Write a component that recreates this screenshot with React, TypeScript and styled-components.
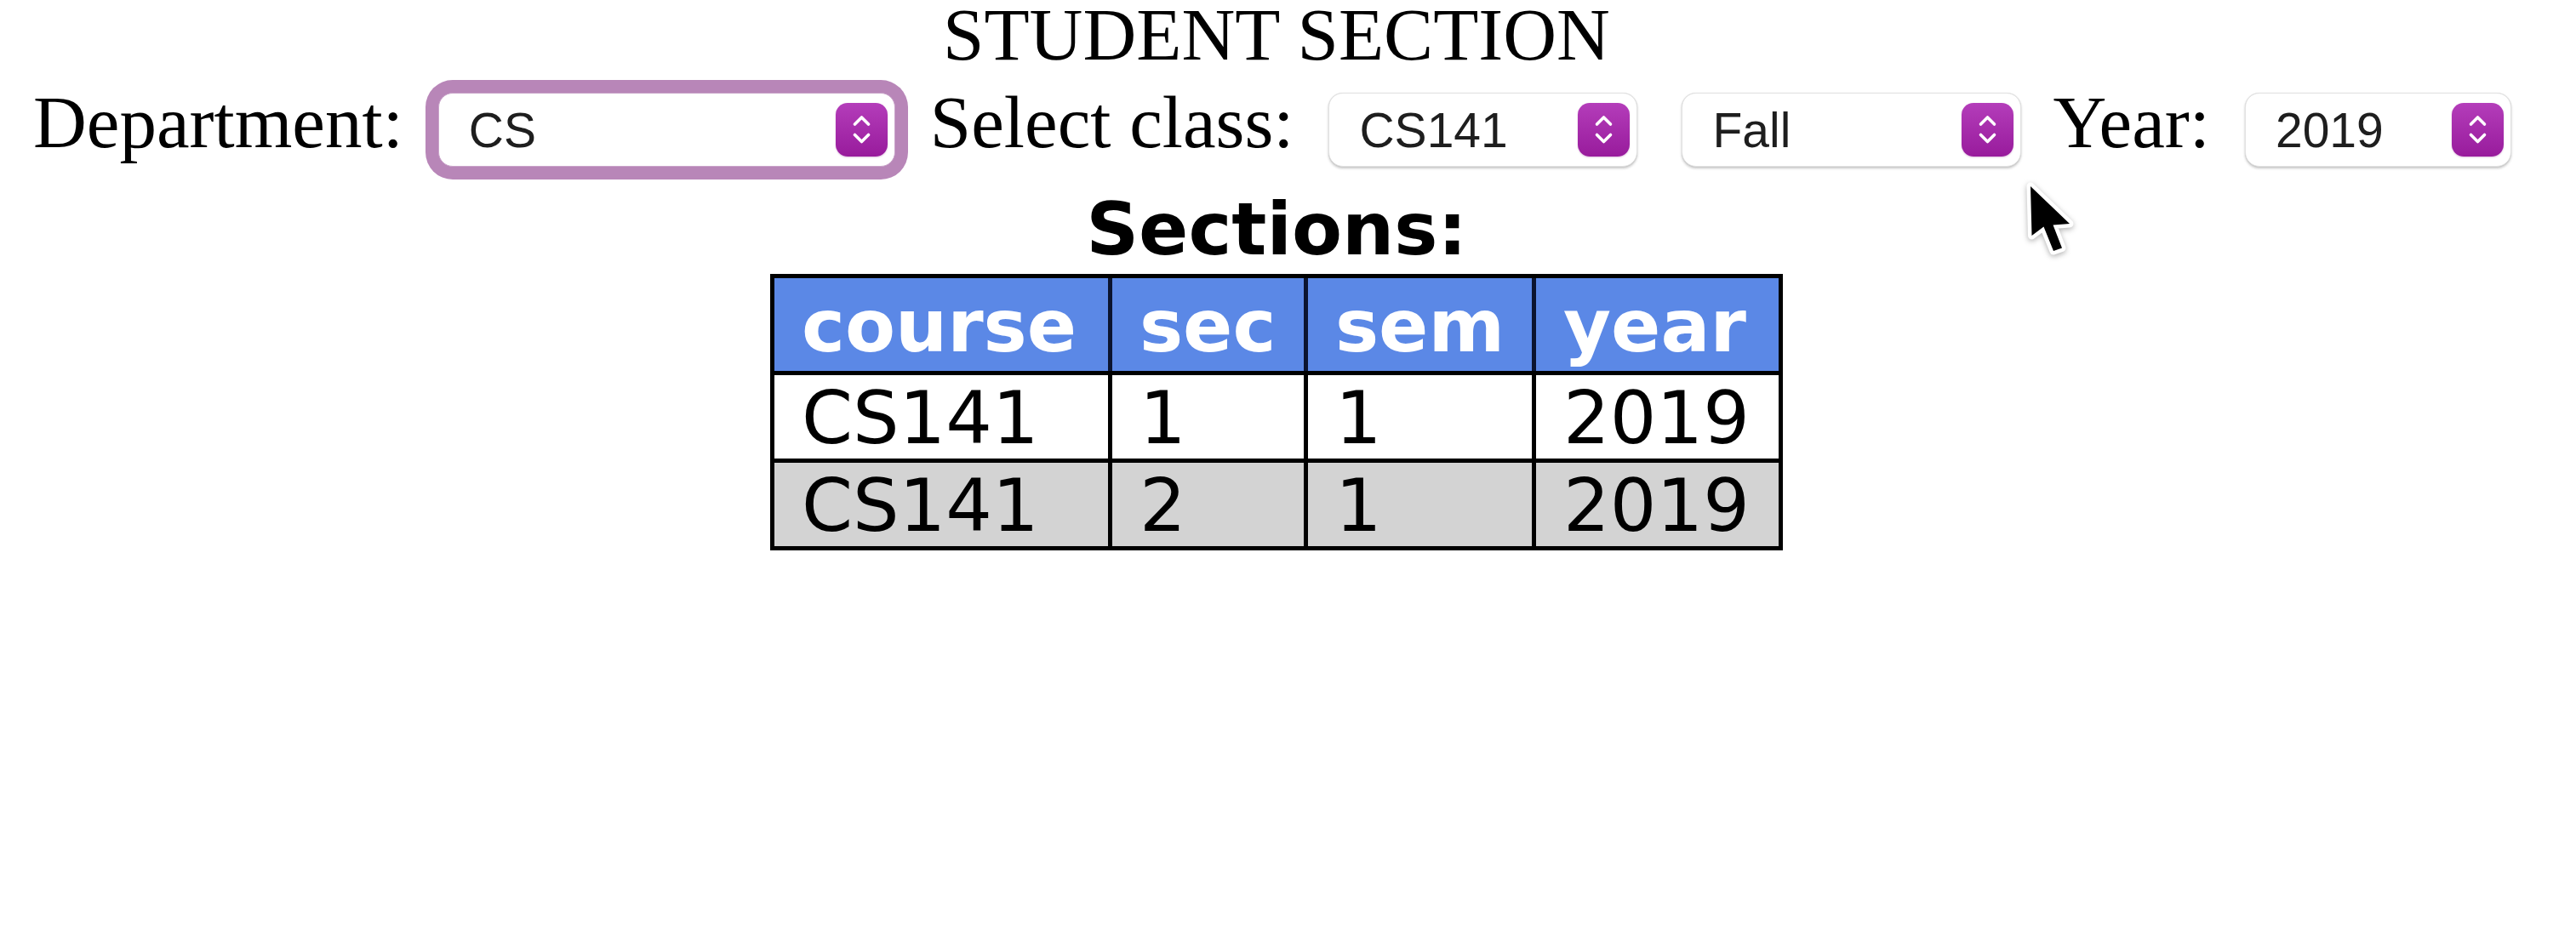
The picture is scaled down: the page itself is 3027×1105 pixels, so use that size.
import React from "react";
import styled, { createGlobalStyle } from "styled-components";

const GlobalStyle = createGlobalStyle`
  html, body { margin: 0; padding: 0; background: #ffffff; }
  body { font-family: "Liberation Serif", "Times New Roman", serif; }
`;

const Page = styled.div`
  position: relative;
  width: 3000px;
  min-height: 1105px;
`;

const Title = styled.h1`
  margin: 0;
  padding-top: 1px;
  font-family: "Liberation Serif", "Times New Roman", serif;
  font-weight: 400;
  font-size: 87px;
  line-height: 80px;
  text-align: center;
  color: #000;
`;

const Controls = styled.div`
  display: flex;
  align-items: baseline;
  margin-top: 23px;
  padding-left: 39px;
`;

const Label = styled.span<{ $ml?: number }>`
  margin-left: ${(p) => p.$ml ?? 0}px;
  font-family: "Liberation Serif", "Times New Roman", serif;
  font-size: 87px;
  line-height: 80px;
  color: #000;
  white-space: nowrap;
`;

const SelectBox = styled.div<{ $w: number; $ml: number; $focused?: boolean }>`
  display: flex;
  align-items: center;
  box-sizing: border-box;
  width: ${(p) => p.$w}px;
  height: 87px;
  margin-left: ${(p) => p.$ml}px;
  padding: 0 8px 0 35px;
  background: #fff;
  border-radius: 17px;
  border: 1px solid ${(p) => (p.$focused ? "#c9a3c9" : "#e2e2e2")};
  box-shadow: ${(p) =>
    p.$focused
      ? "0 0 0 15px #b886b8"
      : "0 2px 3px rgba(0,0,0,0.22), 0 0 1px rgba(0,0,0,0.15)"};
`;

const SelectValue = styled.span`
  flex: 1;
  padding-top: 2px;
  font-family: "Liberation Sans", Arial, sans-serif;
  font-size: 57px;
  line-height: 57px;
  color: #1e1e1e;
  white-space: nowrap;
`;

const ArrowButton = styled.span`
  display: flex;
  align-items: center;
  justify-content: center;
  flex-shrink: 0;
  width: 61px;
  height: 63px;
  border-radius: 14px;
  background: linear-gradient(180deg, #b43dba 0%, #981b9c 100%);
  box-shadow: 0 1px 2px rgba(120, 0, 120, 0.25);
`;

const SectionsHeading = styled.h2`
  margin: 33px 0 0;
  font-family: "DejaVu Sans", Verdana, sans-serif;
  font-weight: 700;
  font-size: 86px;
  line-height: 80px;
  text-align: center;
  color: #000;
`;

const Table = styled.table`
  margin: 13px auto 0;
  border: 5px solid #000;
  border-spacing: 0;
  font-family: "DejaVu Sans", Verdana, sans-serif;
  font-size: 86px;
`;

const HeadCell = styled.th<{ $w: number }>`
  width: ${(p) => p.$w - 64}px;
  background: #5b88e6;
  color: #fff;
  font-weight: 700;
  text-align: left;
  padding: 3px 32px 0;
  line-height: 106px;
  white-space: nowrap;
  & + & {
    border-left: 5px solid #0b1430;
  }
`;

const Cell = styled.td<{ $alt?: boolean }>`
  background: ${(p) => (p.$alt ? "#d3d3d3" : "#ffffff")};
  color: #000;
  font-weight: 400;
  text-align: left;
  padding: 3px 32px 0;
  line-height: 95px;
  border-top: 5px solid #000;
  white-space: nowrap;
  & + & {
    border-left: 5px solid #000;
  }
`;

const Cursor = styled.svg`
  position: absolute;
  left: 2380px;
  top: 213px;
  filter: drop-shadow(0 2px 3px rgba(0, 0, 0, 0.3));
`;

const Chevrons = () => (
  <svg width="61" height="63" viewBox="0 0 61 63" fill="none">
    <polyline
      points="22.5,25 30.5,17 38.5,25"
      stroke="#fff"
      strokeWidth="3.6"
      strokeLinecap="round"
      strokeLinejoin="round"
    />
    <polyline
      points="22.5,37.5 30.5,45.5 38.5,37.5"
      stroke="#fff"
      strokeWidth="3.6"
      strokeLinecap="round"
      strokeLinejoin="round"
    />
  </svg>
);

type SelectProps = { value: string; w: number; ml: number; focused?: boolean };

const Select = ({ value, w, ml, focused }: SelectProps) => (
  <SelectBox $w={w} $ml={ml} $focused={focused}>
    <SelectValue>{value}</SelectValue>
    <ArrowButton>
      <Chevrons />
    </ArrowButton>
  </SelectBox>
);

const columns = [
  { name: "course", w: 392 },
  { name: "sec", w: 225 },
  { name: "sem", w: 260 },
  { name: "year", w: 285 },
];

const rows = [
  ["CS141", "1", "1", "2019"],
  ["CS141", "2", "1", "2019"],
];

export default function App() {
  return (
    <>
      <GlobalStyle />
      <Page>
        <Title>STUDENT SECTION</Title>
        <Controls>
          <Label>Department:</Label>
          <Select value="CS" w={537} ml={41} focused />
          <Label $ml={41}>Select class:</Label>
          <Select value="CS141" w={363} ml={41} />
          <Select value="Fall" w={399} ml={52} />
          <Label $ml={37}>Year:</Label>
          <Select value="2019" w={313} ml={41} />
        </Controls>
        <SectionsHeading>Sections:</SectionsHeading>
        <Table>
          <thead>
            <tr>
              {columns.map((c) => (
                <HeadCell key={c.name} $w={c.w}>
                  {c.name}
                </HeadCell>
              ))}
            </tr>
          </thead>
          <tbody>
            {rows.map((r, i) => (
              <tr key={i}>
                {r.map((v, j) => (
                  <Cell key={j} $alt={i % 2 === 1}>
                    {v}
                  </Cell>
                ))}
              </tr>
            ))}
          </tbody>
        </Table>
        <Cursor width="64" height="96" viewBox="0 0 64 96">
          <path
            d="M6 6 L7.5 64 L21.5 53.5 L33 82 L43 78.5 L32.5 51.5 L52 50 Z"
            fill="#000"
            stroke="#fff"
            strokeWidth="9"
            strokeLinejoin="round"
            paintOrder="stroke"
          />
        </Cursor>
      </Page>
    </>
  );
}
